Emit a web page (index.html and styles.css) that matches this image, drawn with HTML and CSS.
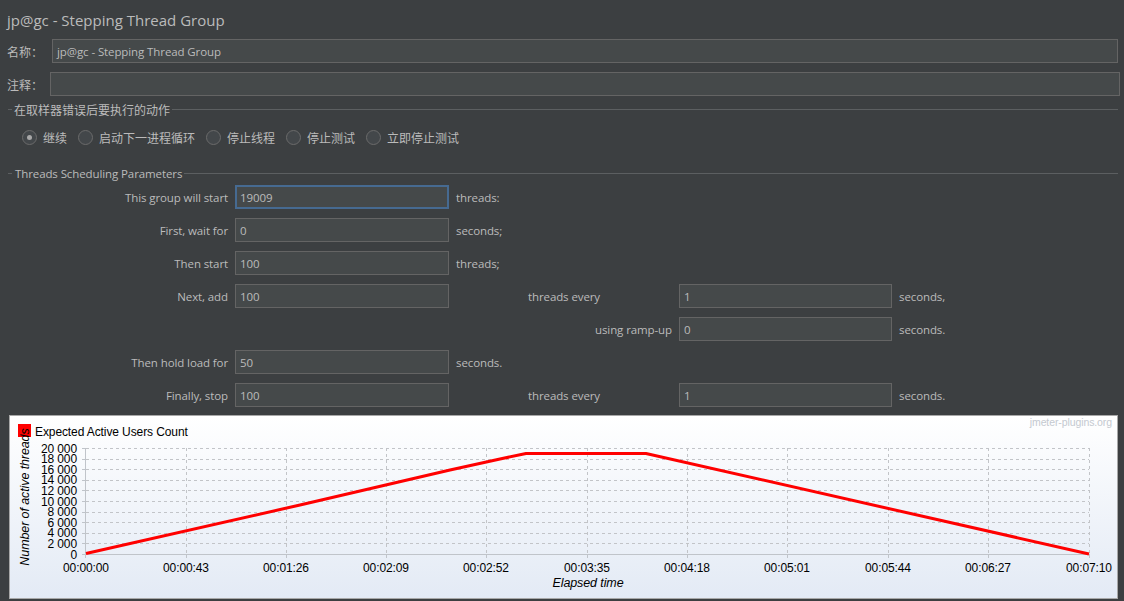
FILE: index.html
```html
<!DOCTYPE html>
<html lang="zh">
<head>
<meta charset="utf-8">
<title>jp@gc - Stepping Thread Group</title>
<link rel="stylesheet" href="styles.css">
</head>
<body>
<div class="title">jp@gc - Stepping Thread Group</div>

<div class="frow frow-name">
  <span class="flabel cjk">名称：</span>
  <div class="tbox">jp@gc - Stepping Thread Group</div>
</div>
<div class="frow frow-comment">
  <span class="flabel cjk">注释：</span>
  <div class="tbox"></div>
</div>

<div class="ghead">
  <span class="gline-s"></span>
  <span class="gtext cjk">在取样器错误后要执行的动作</span>
  <span class="gline"></span>
</div>
<div class="radios">
  <div class="ritem"><span class="radio on"></span><span class="cjk">继续</span></div>
  <div class="ritem"><span class="radio"></span><span class="cjk">启动下一进程循环</span></div>
  <div class="ritem"><span class="radio"></span><span class="cjk">停止线程</span></div>
  <div class="ritem"><span class="radio"></span><span class="cjk">停止测试</span></div>
  <div class="ritem"><span class="radio"></span><span class="cjk">立即停止测试</span></div>
</div>

<div class="ghead ghead2">
  <span class="gline-s"></span>
  <span class="gtext gtext-en">Threads Scheduling Parameters</span>
  <span class="gline"></span>
</div>

<div class="sched">
  <div class="lbl c1">This group will start</div>
  <div class="inp focus">19009</div>
  <div class="unit">threads:</div>

  <div class="lbl c1">First, wait for</div>
  <div class="inp">0</div>
  <div class="unit">seconds;</div>

  <div class="lbl c1">Then start</div>
  <div class="inp">100</div>
  <div class="unit">threads;</div>

  <div class="lbl c1">Next, add</div>
  <div class="inp">100</div>
  <div class="unit mid">threads every</div>
  <div class="inp">1</div>
  <div class="unit">seconds,</div>

  <div class="lbl c3">using ramp-up</div>
  <div class="inp">0</div>
  <div class="unit">seconds.</div>

  <div class="lbl c1">Then hold load for</div>
  <div class="inp">50</div>
  <div class="unit">seconds.</div>

  <div class="lbl c1">Finally, stop</div>
  <div class="inp">100</div>
  <div class="unit mid">threads every</div>
  <div class="inp">1</div>
  <div class="unit">seconds.</div>
</div>

<div class="chart">
  <svg class="plot" width="1107" height="182" viewBox="10 416 1107 182" xmlns="http://www.w3.org/2000/svg">
    <text class="wm" x="1112" y="426" text-anchor="end">jmeter-plugins.org</text>

    <rect x="18" y="424" width="13" height="13" fill="#ff0000"/>
    <text class="ct" x="35" y="436">Expected Active Users Count</text>

    <g class="grid">
      <line x1="86" y1="543.5" x2="1089" y2="543.5"/>
      <line x1="86" y1="533.5" x2="1089" y2="533.5"/>
      <line x1="86" y1="522.5" x2="1089" y2="522.5"/>
      <line x1="86" y1="512.5" x2="1089" y2="512.5"/>
      <line x1="86" y1="501.5" x2="1089" y2="501.5"/>
      <line x1="86" y1="490.5" x2="1089" y2="490.5"/>
      <line x1="86" y1="480.5" x2="1089" y2="480.5"/>
      <line x1="86" y1="469.5" x2="1089" y2="469.5"/>
      <line x1="86" y1="459.5" x2="1089" y2="459.5"/>
      <line x1="86" y1="448.5" x2="1089" y2="448.5"/>
      <line x1="186.5" y1="448" x2="186.5" y2="554"/>
      <line x1="286.5" y1="448" x2="286.5" y2="554"/>
      <line x1="386.5" y1="448" x2="386.5" y2="554"/>
      <line x1="486.5" y1="448" x2="486.5" y2="554"/>
      <line x1="587.5" y1="448" x2="587.5" y2="554"/>
      <line x1="687.5" y1="448" x2="687.5" y2="554"/>
      <line x1="787.5" y1="448" x2="787.5" y2="554"/>
      <line x1="888.5" y1="448" x2="888.5" y2="554"/>
      <line x1="988.5" y1="448" x2="988.5" y2="554"/>
      <line x1="1089.5" y1="448" x2="1089.5" y2="554"/>
    </g>

    <g class="axis">
      <line x1="85.5" y1="448" x2="85.5" y2="555"/>
      <line x1="85" y1="554.5" x2="1090" y2="554.5"/>
      <line x1="82" y1="554.5" x2="86" y2="554.5"/>
      <line x1="82" y1="543.5" x2="86" y2="543.5"/>
      <line x1="82" y1="533.5" x2="86" y2="533.5"/>
      <line x1="82" y1="522.5" x2="86" y2="522.5"/>
      <line x1="82" y1="512.5" x2="86" y2="512.5"/>
      <line x1="82" y1="501.5" x2="86" y2="501.5"/>
      <line x1="82" y1="490.5" x2="86" y2="490.5"/>
      <line x1="82" y1="480.5" x2="86" y2="480.5"/>
      <line x1="82" y1="469.5" x2="86" y2="469.5"/>
      <line x1="82" y1="459.5" x2="86" y2="459.5"/>
      <line x1="82" y1="448.5" x2="86" y2="448.5"/>
      <line x1="85.5" y1="554" x2="85.5" y2="558"/>
      <line x1="186.5" y1="554" x2="186.5" y2="558"/>
      <line x1="286.5" y1="554" x2="286.5" y2="558"/>
      <line x1="386.5" y1="554" x2="386.5" y2="558"/>
      <line x1="486.5" y1="554" x2="486.5" y2="558"/>
      <line x1="587.5" y1="554" x2="587.5" y2="558"/>
      <line x1="687.5" y1="554" x2="687.5" y2="558"/>
      <line x1="787.5" y1="554" x2="787.5" y2="558"/>
      <line x1="888.5" y1="554" x2="888.5" y2="558"/>
      <line x1="988.5" y1="554" x2="988.5" y2="558"/>
      <line x1="1089.5" y1="554" x2="1089.5" y2="558"/>
    </g>

    <g class="ct" text-anchor="end">
      <text x="77" y="558.5">0</text>
      <text x="77" y="547.9">2 000</text>
      <text x="77" y="537.3">4 000</text>
      <text x="77" y="526.7">6 000</text>
      <text x="77" y="516.1">8 000</text>
      <text x="77" y="505.5">10 000</text>
      <text x="77" y="494.9">12 000</text>
      <text x="77" y="484.3">14 000</text>
      <text x="77" y="473.7">16 000</text>
      <text x="77" y="463.1">18 000</text>
      <text x="77" y="452.5">20 000</text>
    </g>

    <g class="ct" text-anchor="middle">
      <text x="86" y="572">00:00:00</text>
      <text x="186" y="572">00:00:43</text>
      <text x="286" y="572">00:01:26</text>
      <text x="386" y="572">00:02:09</text>
      <text x="486" y="572">00:02:52</text>
      <text x="587" y="572">00:03:35</text>
      <text x="687" y="572">00:04:18</text>
      <text x="787" y="572">00:05:01</text>
      <text x="888" y="572">00:05:44</text>
      <text x="988" y="572">00:06:27</text>
      <text x="1089" y="572">00:07:10</text>
    </g>

    <text class="ct it" x="588" y="587" text-anchor="middle">Elapsed time</text>
    <text class="ct it" transform="translate(29 497) rotate(-90)" text-anchor="middle">Number of active threads</text>

    <polyline class="series" points="86,553.5 300,505 450,470 500,459 526,453.5 646,453.5 1089,554"/>
  </svg>
</div>
</body>
</html>
```

FILE: styles.css
```css
* { box-sizing: border-box; }

html, body {
  margin: 0;
  padding: 0;
  background: #3c3f41;
}

body {
  width: 1124px;
  height: 601px;
  overflow: hidden;
  font-family: "Open Sans", "Noto Sans CJK SC", sans-serif;
  font-size: 11.5px;
  letter-spacing: -0.1px;
  color: #bbbbbb;
}

.cjk {
  font-family: "Noto Sans CJK SC", sans-serif;
  font-size: 12px;
  letter-spacing: 0;
}

.title {
  height: 39px;
  line-height: 40px;
  padding-left: 7px;
  font-size: 15px;
  letter-spacing: 0;
  white-space: nowrap;
}

.frow {
  display: flex;
  align-items: center;
  height: 24px;
}

.frow-comment { margin-top: 9px; }

.flabel {
  padding-left: 7px;
  flex: none;
}

.frow-name .flabel { width: 52px; }
.frow-comment .flabel { width: 50px; }

.tbox {
  flex: 1;
  height: 24px;
  background: #45494a;
  border: 1px solid #646464;
  padding-left: 4px;
  display: flex;
  align-items: center;
  white-space: nowrap;
}

.frow-name .tbox { margin-right: 6px; }
.frow-comment .tbox { margin-right: 4px; }

.ghead {
  display: flex;
  align-items: center;
  height: 14px;
  margin-top: 6px;
  margin-right: 6px;
}

.gline-s {
  width: 4px;
  margin-left: 8px;
  border-top: 1px solid #5c5f61;
}

.gtext {
  margin: 0 2px;
  white-space: nowrap;
}

.gtext-en { margin-left: 3px; }

.gline {
  flex: 1;
  border-top: 1px solid #5c5f61;
}

.radios {
  display: flex;
  align-items: center;
  height: 16px;
  margin-top: 13px;
  padding-left: 22px;
  gap: 11px;
}

.ritem {
  display: flex;
  align-items: center;
  gap: 6px;
}

.radio {
  width: 15px;
  height: 15px;
  border-radius: 50%;
  border: 1px solid #6b6b6b;
  background: #43474a;
  display: flex;
  align-items: center;
  justify-content: center;
}

.radio.on::after {
  content: "";
  width: 5px;
  height: 5px;
  border-radius: 50%;
  background: #a8a8a8;
}

.ghead2 { margin-top: 21px; }

.sched {
  display: grid;
  grid-template-columns: 228px 214px 216px 213px auto;
  grid-auto-rows: 24px;
  column-gap: 7px;
  row-gap: 9px;
  margin-top: 5px;
}

.lbl {
  align-self: center;
  text-align: right;
  white-space: nowrap;
}

.c1 { grid-column: 1; }
.c3 { grid-column: 3; }

.unit {
  align-self: center;
  white-space: nowrap;
}

.mid { text-align: center; }

.inp {
  height: 24px;
  background: #45494a;
  border: 1px solid #646464;
  padding-left: 4px;
  display: flex;
  align-items: center;
}

.inp.focus {
  border: 2px solid #466a91;
  padding-left: 3px;
}

.chart {
  margin-top: 8px;
  margin-left: 9px;
  width: 1109px;
  height: 184px;
  border: 1px solid #a8a8a8;
  background: linear-gradient(#ffffff, #e3eaf5);
}

.plot {
  display: block;
}

.ct {
  font-family: "Liberation Sans", Arial, sans-serif;
  font-size: 12px;
  fill: #000000;
}

.it {
  font-style: italic;
  font-size: 12.5px;
}

.wm {
  font-family: "Liberation Sans", Arial, sans-serif;
  font-size: 10.5px;
  fill: #c4c9d0;
}

.grid line {
  stroke: #c2c4c8;
  stroke-width: 1;
  stroke-dasharray: 3 3;
}

.axis line {
  stroke: #c0c4ca;
  stroke-width: 1;
}

.series {
  fill: none;
  stroke: #ff0000;
  stroke-width: 3;
  stroke-linejoin: round;
}
```
